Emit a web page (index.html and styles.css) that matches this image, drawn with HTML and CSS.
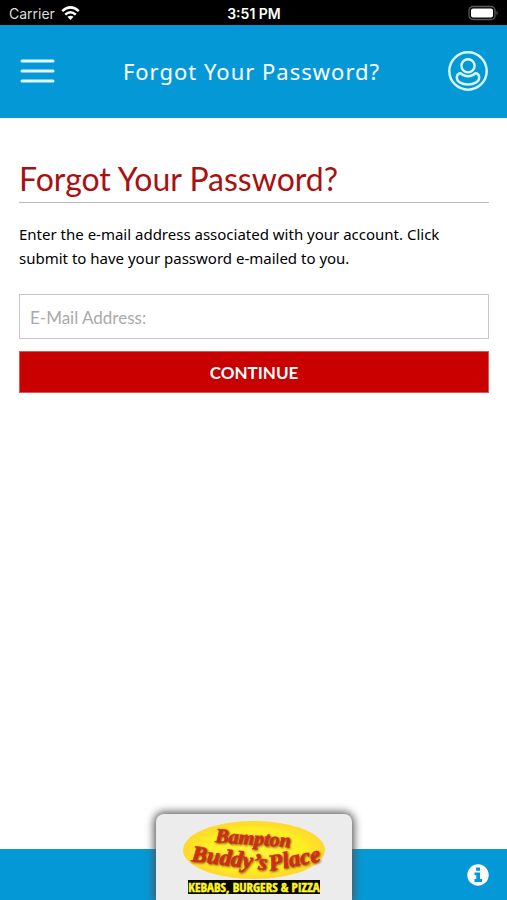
FILE: index.html
```html
<!DOCTYPE html>
<html lang="en">
<head>
<meta charset="utf-8">
<meta name="viewport" content="width=device-width, initial-scale=1">
<title>Forgot Your Password?</title>
<link rel="stylesheet" href="styles.css">
</head>
<body>
<div class="status">
  <div class="carrier">Carrier
    <svg width="19" height="14" viewBox="0 0 19 14" fill="none" stroke="#fff" stroke-width="2.5" aria-hidden="true">
      <path d="M1.2 5.2Q9.500-2.400 17.800 5.200M4.200 8.600Q9.500 4 14.800 8.600"/>
      <path d="M6.500 10.800Q9.500 8.500 12.500 10.800L9.500 14Z" fill="#fff" stroke="none"/>
    </svg>
  </div>
  <div class="time">3:51 PM</div>
  <svg class="battery" width="31" height="16" viewBox="0 0 31 16" aria-hidden="true">
    <rect x="1" y="1.500" width="26" height="13" rx="4" fill="none" stroke="#5a5a5a" stroke-width="1.300"/>
    <rect x="3" y="3.500" width="22" height="9" rx="2" fill="#fff"/>
    <path d="M28.500 5.500Q31 8 28.500 10.500Z" fill="#5a5a5a"/>
  </svg>
</div>
<header class="header">
  <button class="icon-button menu" aria-label="Menu">
    <svg width="35" height="26" viewBox="0 0 35 26" stroke="#e2faff" stroke-width="3" stroke-linecap="round"><path d="M2 3H33M2 13H33M2 23H33"/></svg>
  </button>
  <div class="title">Forgot Your Password?</div>
  <button class="icon-button" aria-label="Account">
    <svg width="40" height="40" viewBox="0 0 40 40" fill="none" stroke="#d9f7ff" stroke-width="2.400" stroke-linejoin="round">
      <circle cx="20" cy="20" r="18.700"/>
      <circle cx="20" cy="14.800" r="6.600"/>
      <path d="M12.500 22.200C10.200 22.500 8.800 24.300 8.800 26.500C8.800 30.800 14 33.500 20 33.500S31.200 30.800 31.200 26.500C31.200 24.300 29.800 22.500 27.500 22.200C23.500 26.200 16.500 26.200 12.500 22.200Z"/>
    </svg>
  </button>
</header>
<main class="content">
  <h1>Forgot Your Password?</h1>
  <p>Enter the e-mail address associated with your account. Click submit to have your password e-mailed to you.</p>
  <form>
    <input type="email" placeholder="E-Mail Address:" aria-label="E-Mail Address">
    <button type="button" class="submit">CONTINUE</button>
  </form>
</main>
<footer class="footer">
  <div class="brand">
    <svg width="142" height="82" viewBox="0 0 142 82" role="img" aria-label="Bampton Buddy's Place">
      <defs>
        <radialGradient id="sun"><stop offset="0" stop-color="#fff23a"/><stop offset=".7" stop-color="#ffee22"/><stop offset="1" stop-color="#ffd72c"/></radialGradient>
      </defs>
      <ellipse cx="71" cy="35" rx="71" ry="29" fill="url(#sun)"/>
      <g class="script-shadow">
        <text class="script small" x="32" y="27" transform="rotate(4 32 27)">Bampton</text>
        <text class="script large" x="8" y="46" transform="rotate(7 8 46)">Buddy’s</text>
        <text class="script large" x="87" y="56" transform="rotate(-11 87 56)">Place</text>
      </g>
      <rect x="5" y="65" width="132" height="14" fill="#080800"/>
      <text class="strap" x="71" y="77" text-anchor="middle">KEBABS, BURGERS &amp; PIZZA</text>
    </svg>
  </div>
  <button class="icon-button info" aria-label="Information">
    <svg width="22" height="22" viewBox="0 0 22 22"><circle cx="11" cy="11" r="10.700" fill="#fff"/><path d="M9 3.500H13V6.800H9ZM7.500 8.500H13V15H15V18H7.500V15H9.300V11.200H7.500Z" fill="#0499d6"/></svg>
  </button>
</footer>
</body>
</html>
```
FILE: styles.css
```css
* { box-sizing: border-box; }
body {
  margin: 0;
  min-height: 100vh;
  display: flex;
  flex-direction: column;
  background: #fff;
  color: #000;
  font-family: Lato, sans-serif;
}
.status {
  height: 25px;
  padding: 1px 8px 0 9px;
  display: grid;
  grid-template-columns: 1fr auto 1fr;
  align-items: center;
  background: #000;
  color: #fff;
  font: 14px Inter, sans-serif;
}
.carrier { display: flex; align-items: center; gap: 6px; color: #ddd; }
.time { font-weight: 600; }
.battery { justify-self: end; }
.header {
  height: 93px;
  padding: 0 19px 2px 20px;
  display: flex;
  align-items: center;
  justify-content: space-between;
  background: #0499d6;
}
.title {
  color: #fff;
  font: 22px "Noto Sans", sans-serif;
  letter-spacing: 1px;
}
.icon-button {
  padding: 0;
  border: 0;
  background: none;
  display: flex;
}
.content {
  flex: 1;
  padding: 40px 18px 0 19px;
}
h1 {
  margin: 0 0 19px;
  padding-bottom: 2px;
  border-bottom: 1px solid #bbb;
  color: #a91111;
  font-size: 32px;
  line-height: 42px;
  font-weight: 400;
}
p {
  margin: 0 0 24px;
  font: 15px/24px "Noto Sans", sans-serif;
}
form { display: grid; gap: 12px; }
input {
  width: 100%;
  height: 45px;
  padding: 1px 10px 0;
  border: 1px solid #c8c8c8;
  border-radius: 0;
  font: 17px Lato, sans-serif;
}
input::placeholder { color: #aaa; opacity: 1; }
.submit {
  height: 42px;
  padding: 0;
  border: 1px solid #dc5555;
  background: #c80000;
  color: #fff;
  font: 700 17px Lato, sans-serif;
}
.footer {
  height: 51px;
  padding: 0 18px;
  display: grid;
  grid-template-columns: 1fr auto 1fr;
  grid-template-rows: 51px;
  align-items: end;
  background: #0499d6;
}
.brand {
  grid-column: 2;
  width: 196px;
  height: 86px;
  padding-top: 1px;
  display: flex;
  justify-content: center;
  border-radius: 8px 8px 0 0;
  background: #ececec;
  box-shadow: 0 0 8px 2px #555;
}
.info { justify-self: end; align-self: center; }
.script {
  font-family: "Liberation Serif", serif;
  font-style: italic;
  font-weight: 700;
  fill: #d62a1c;
  stroke: #d62a1c;
  stroke-width: 0.5;
}
.script-shadow { filter: drop-shadow(1px 1px 1px #70400a); }
.small { font-size: 20px; }
.large { font-size: 23px; }
.strap {
  fill: #fff52a;
  stroke: #fff52a;
  stroke-width: 0.5;
  font: 700 13px "Liberation Sans Narrow", "Open Sans Condensed", "Roboto Condensed", sans-serif;
}
```
